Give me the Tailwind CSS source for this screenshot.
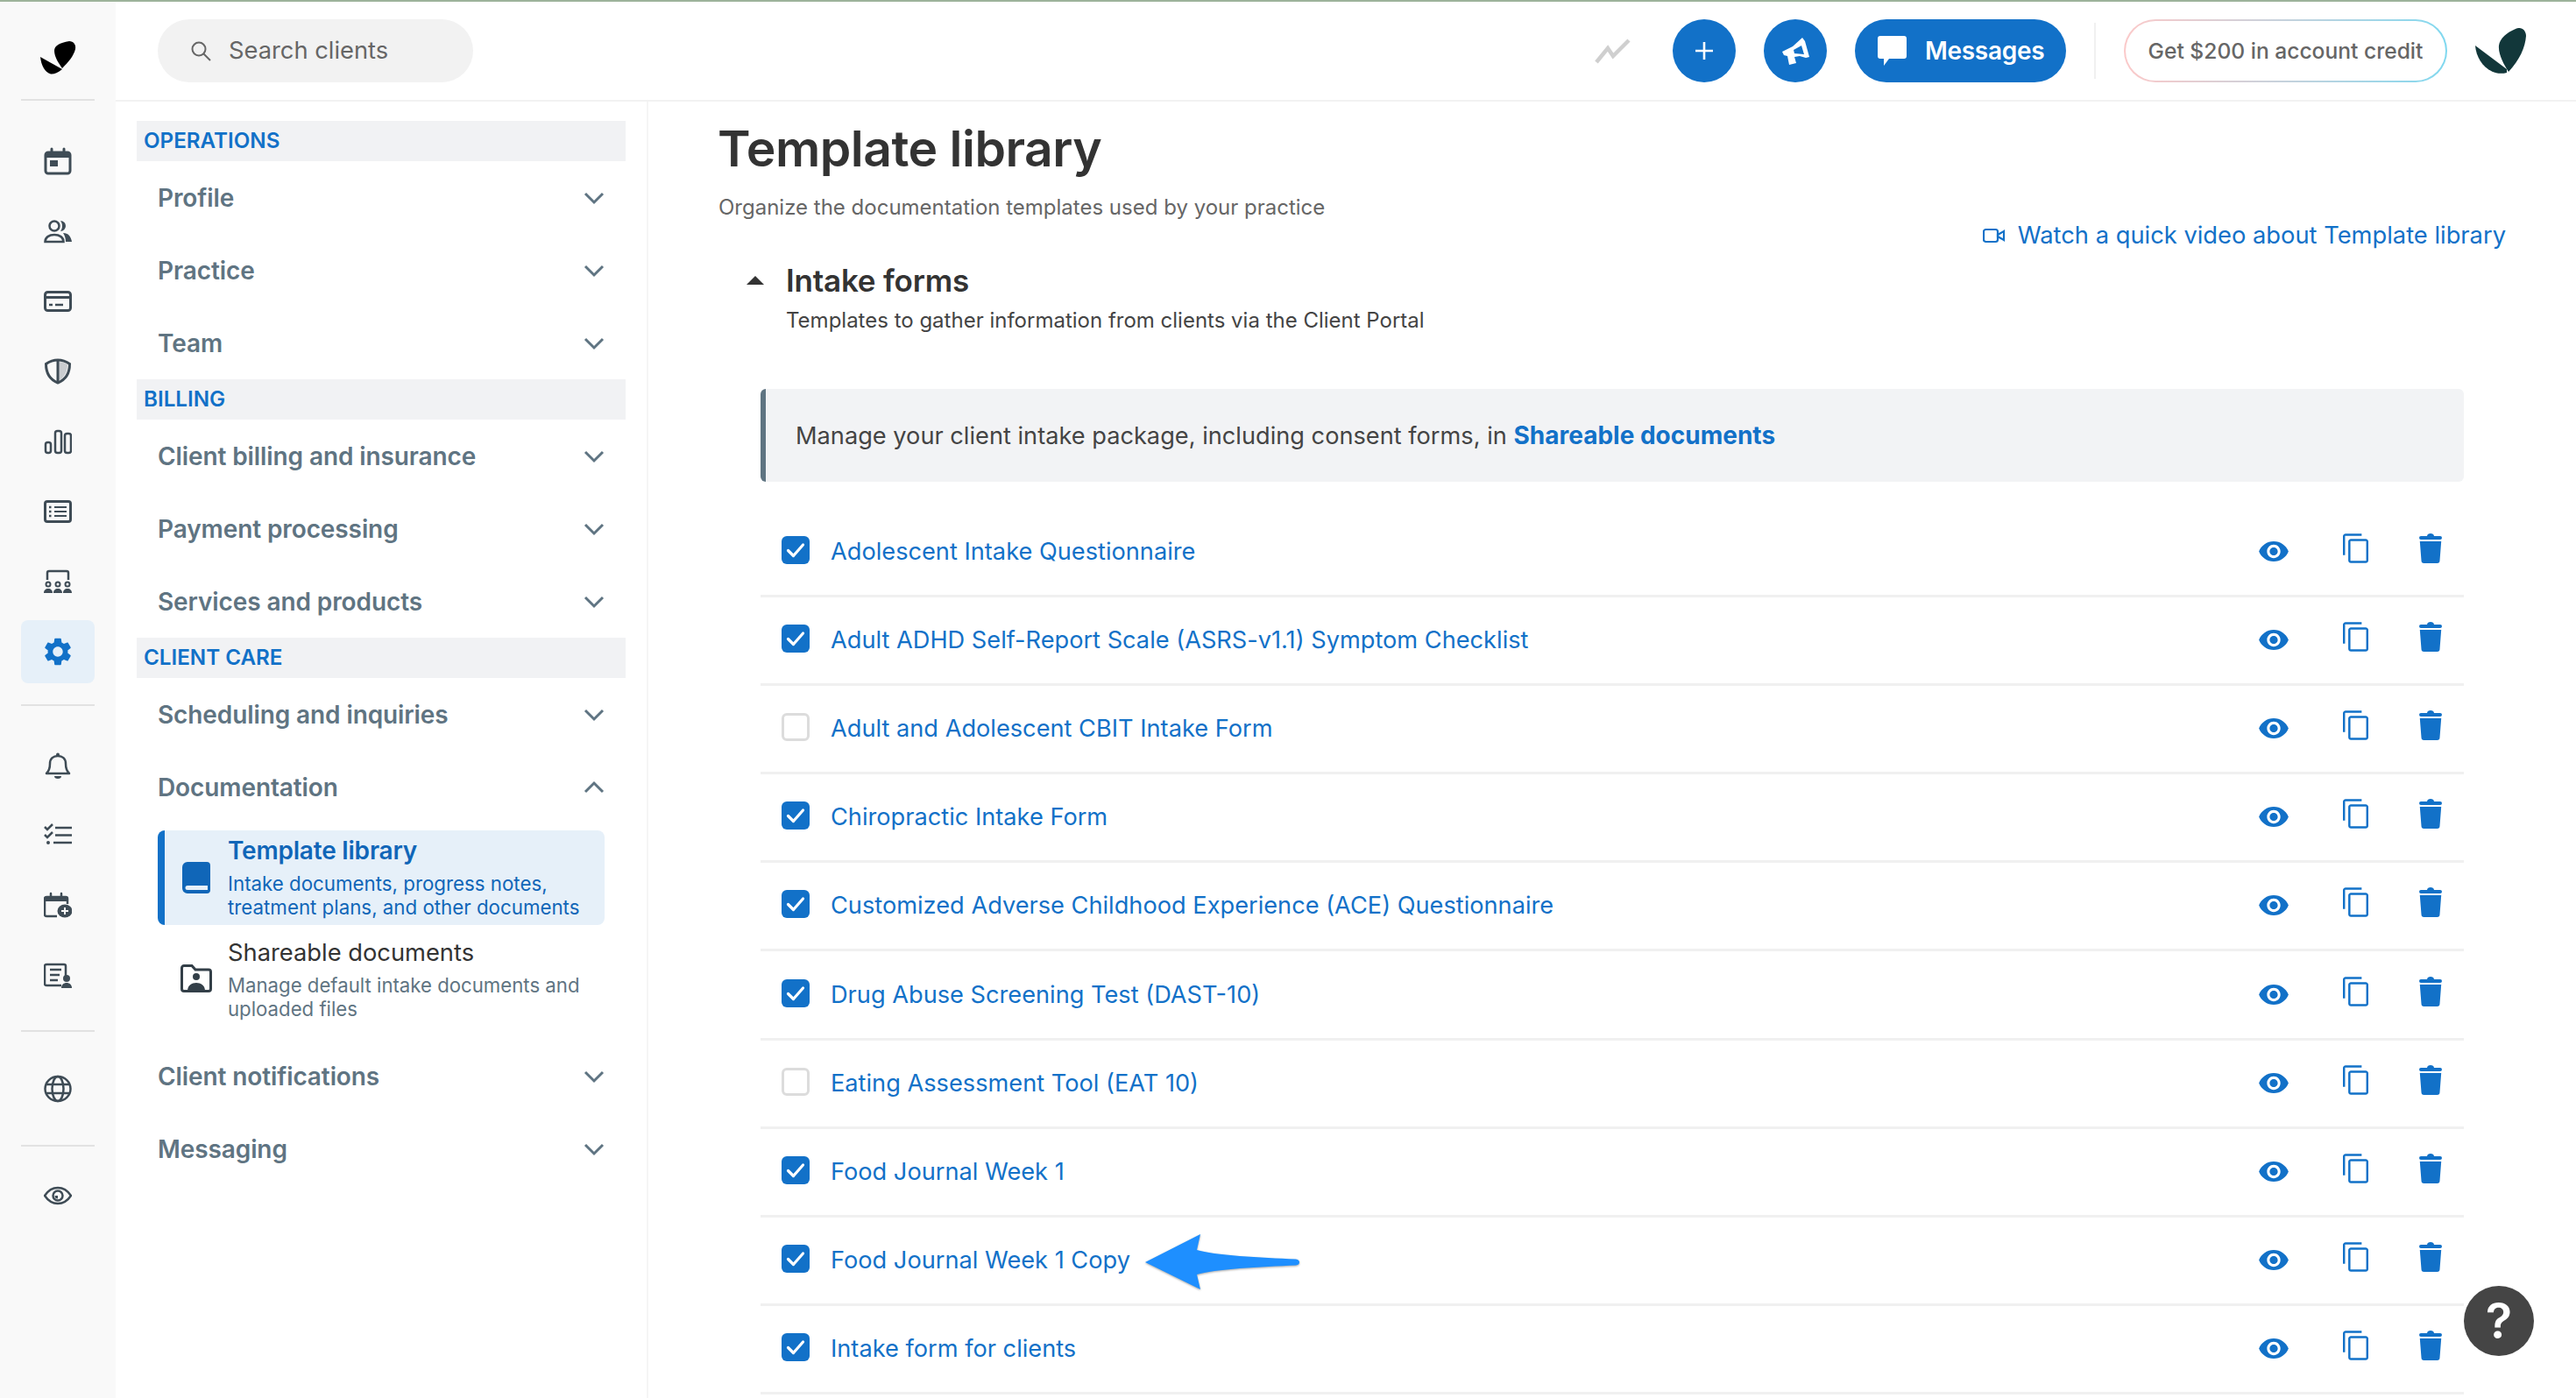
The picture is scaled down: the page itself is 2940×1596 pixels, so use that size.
<!DOCTYPE html>
<html>
  <head>
    <meta charset="utf-8">
    <script src="https://cdn.jsdelivr.net/npm/@tailwindcss/browser@4"></script>
  </head>

  <body class="bg-white">
    <div id="app" class="relative w-[2940px] h-[1596px] overflow-hidden font-[Inter,sans-serif]"></div>
    <script>
      const railIcons = {
        calendar: `<rect x="2" y="6" width="28" height="24" rx="3" fill="none" stroke="currentColor" stroke-width="3"/><path d="M2 6h28v6H2z" fill="currentColor"/><path d="M9 2v5M23 2v5" stroke="currentColor" stroke-width="3" stroke-linecap="round"/><rect x="7" y="15" width="9" height="7" fill="currentColor"/>`,
        people: `<circle cx="12" cy="10" r="5.5" fill="none" stroke="currentColor" stroke-width="2.5"/><path d="M1.5 28c0-5 4.500-8 10.500-8s10.500 3 10.500 8z" fill="none" stroke="currentColor" stroke-width="2.5"/><path d="M19 4a6 6 0 0 1 0 12c1.500-2 2-4 2-6s-.5-4-2-6zM22 18c6 0 9 4 10 10h-7c0-4-1-7-3-10z" fill="currentColor"/>`,
        card: `<rect x="1.500" y="5.500" width="29" height="21" rx="3" fill="none" stroke="currentColor" stroke-width="3"/><path d="M2 10h28v3H2z" fill="currentColor"/><path d="M6 20h4M13 20h9" stroke="currentColor" stroke-width="2.500"/>`,
        shield: `<path d="M16 3C11 3 6 5 2.500 7.500 2.500 17 6 25 16 29c10-4 13.500-12 13.500-21.500C26 5 21 3 16 3z" fill="none" stroke="currentColor" stroke-width="3"/><path d="M16 3v26" stroke="currentColor" stroke-width="3"/><path d="M16 5c4 0 8 1 11 3 0 8-3 15-11 19z" fill="currentColor" opacity=".25"/>`,
        bars: `<rect x="2" y="17" width="6" height="12" rx="2.500" fill="none" stroke="currentColor" stroke-width="2.500"/><rect x="13" y="4" width="7" height="25" rx="2.500" fill="none" stroke="currentColor" stroke-width="2.500"/><rect x="24" y="7" width="7" height="22" rx="2.500" fill="none" stroke="currentColor" stroke-width="2.500"/>`,
        list: `<rect x="1.500" y="4.500" width="29" height="23" rx="2.500" fill="none" stroke="currentColor" stroke-width="3"/><path d="M12 11h14M12 16h14M12 21h14" stroke="currentColor" stroke-width="2"/><path d="M6 11h2.500M6 16h2.500M6 21h2.500" stroke="currentColor" stroke-width="2.500"/>`,
        seats: `<path d="M4 14V6a2 2 0 0 1 2-2h20a2 2 0 0 1 2 2v8" fill="none" stroke="currentColor" stroke-width="2.500"/><circle cx="5" cy="19" r="2.500" fill="none" stroke="currentColor" stroke-width="2"/><circle cx="16" cy="19" r="2.500" fill="none" stroke="currentColor" stroke-width="2"/><circle cx="27" cy="19" r="2.500" fill="none" stroke="currentColor" stroke-width="2"/><path d="M0 29c0-3 2-5 5-5s5 2 5 5zM11 29c0-3 2-5 5-5s5 2 5 5zM22 29c0-3 2-5 5-5s5 2 5 5z" fill="currentColor"/>`,
        gear: `<path transform="scale(1.333)" d="M19.14 12.94c.04-.3.06-.61.06-.94 0-.32-.02-.64-.07-.94l2.03-1.58c.18-.14.23-.41.12-.61l-1.92-3.32c-.12-.22-.37-.29-.59-.22l-2.39.96c-.5-.38-1.03-.7-1.62-.94l-.36-2.54c-.04-.24-.24-.41-.48-.41h-3.84c-.24 0-.43.17-.47.41l-.36 2.54c-.59.24-1.13.57-1.62.94l-2.39-.96c-.22-.08-.47 0-.59.22L2.74 8.87c-.12.21-.08.47.12.61l2.03 1.58c-.05.3-.09.63-.09.94s.02.64.07.94l-2.03 1.58c-.18.14-.23.41-.12.61l1.92 3.32c.12.22.37.29.59.22l2.39-.96c.5.38 1.03.7 1.62.94l.36 2.54c.05.24.24.41.48.41h3.84c.24 0 .44-.17.47-.41l.36-2.54c.59-.24 1.13-.56 1.62-.94l2.39.96c.22.08.47 0 .59-.22l1.92-3.32c.12-.22.07-.47-.12-.61l-2.01-1.58zM12 15.6c-1.98 0-3.6-1.62-3.6-3.6s1.62-3.6 3.6-3.6 3.6 1.62 3.6 3.6-1.62 3.6-3.6 3.6z" fill="currentColor"/>`,
        bell: `<path d="M3 25c3-3 4-6 4-11 0-6 4-9 9-9s9 3 9 9c0 5 1 8 4 11z" fill="none" stroke="currentColor" stroke-width="2.500" stroke-linejoin="round"/><circle cx="16" cy="3.500" r="2" fill="currentColor"/><path d="M12 28h8a4 3 0 0 1-8 0z" fill="currentColor"/>`,
        check: `<path d="M1 6l3 3 6-6M1 15l3 3 6-6" fill="none" stroke="currentColor" stroke-width="2.500"/><circle cx="5" cy="24" r="2" fill="currentColor"/><path d="M13 7h19M13 15.500h19M11 24h21" stroke="currentColor" stroke-width="2.500"/>`,
        calplus: `<path d="M15 28H3a2 2 0 0 1-2-2V8a2 2 0 0 1 2-2h22a2 2 0 0 1 2 2v6" fill="none" stroke="currentColor" stroke-width="2.500"/><path d="M1 6h26v5H1z" fill="currentColor"/><path d="M8 2v5M20 2v5" stroke="currentColor" stroke-width="2.500" stroke-linecap="round"/><ellipse cx="24" cy="22" rx="8.500" ry="7.500" fill="currentColor"/><path d="M24 18v8M20 22h8" stroke="#f9f9f9" stroke-width="2"/>`,
        docperson: `<path d="M20 27H3a2 2 0 0 1-2-2V5a2 2 0 0 1 2-2h20a2 2 0 0 1 2 2v11" fill="none" stroke="currentColor" stroke-width="2.500"/><path d="M7 9h13M7 15h11M7 21h9" stroke="currentColor" stroke-width="2.500"/><circle cx="26" cy="19" r="4" fill="currentColor"/><path d="M20 30c0-4 3-6 6-6s6 2 6 6z" fill="currentColor"/>`,
        globe: `<ellipse cx="16" cy="16" rx="14.500" ry="14" fill="none" stroke="currentColor" stroke-width="2.500"/><ellipse cx="16" cy="16" rx="6.500" ry="14" fill="none" stroke="currentColor" stroke-width="2.500"/><path d="M3 11h26M3 21h26" stroke="currentColor" stroke-width="2.500"/>`,
        eye: `<path d="M1 16C5 10 10 7 16 7s11 3 15 9c-4 6-9 9-15 9S5 22 1 16z" fill="none" stroke="currentColor" stroke-width="2.500"/><circle cx="16" cy="16" r="5.500" fill="none" stroke="currentColor" stroke-width="2.500"/><path d="M16 12.500a3.500 3.500 0 0 1 3.500 3.500h-3.500z" transform="rotate(180 16 16)" fill="currentColor"/>`,
      };

      const railGroups = [
        ['calendar', 'people', 'card', 'shield', 'bars', 'list', 'seats', 'gear'],
        ['bell', 'check', 'calplus', 'docperson'],
        ['globe'],
        ['eye'],
      ];

      const navSections = [
        { title: 'OPERATIONS', items: ['Profile', 'Practice', 'Team'] },
        { title: 'BILLING', items: ['Client billing and insurance', 'Payment processing', 'Services and products'] },
        { title: 'CLIENT CARE', items: ['Scheduling and inquiries'] },
      ];

      const templates = [
        ['Adolescent Intake Questionnaire', true],
        ['Adult ADHD Self-Report Scale (ASRS-v1.1) Symptom Checklist', true],
        ['Adult and Adolescent CBIT Intake Form', false],
        ['Chiropractic Intake Form', true],
        ['Customized Adverse Childhood Experience (ACE) Questionnaire', true],
        ['Drug Abuse Screening Test (DAST-10)', true],
        ['Eating Assessment Tool (EAT 10)', false],
        ['Food Journal Week 1', true],
        ['Food Journal Week 1 Copy', true],
        ['Intake form for clients', true],
      ];

      function chevron(up) {
        return `<svg class="w-[24px] h-[16px] text-[#5f7482] ${up ? 'rotate-180' : ''}" viewBox="0 0 24 16"><path d="M2 3l10 10L22 3" fill="none" stroke="currentColor" stroke-width="3"/></svg>`;
      }

      function navItem(label, up) {
        return `
          <div class="h-[83px] pl-[24px] pr-[24px] flex items-center justify-between">
            <span class="text-[28px] font-semibold text-[#5f7482] tracking-[-0.1px]">${label}</span>
            ${chevron(up)}
          </div>`;
      }

      function navSection(section) {
        return `
          <div class="h-[46px] bg-[#f1f2f4] pl-[8px] pt-[1px] flex items-center text-[24.2px] leading-none font-semibold text-[#1271c8]">${section.title}</div>
          ${section.items.map((item) => navItem(item)).join('')}`;
      }

      function row(template) {
        const box = template[1]
          ? `<span class="w-[32px] h-[32px] mb-[4px] rounded-[6px] bg-[#1271c8] flex items-center justify-center"><svg class="w-[22px] h-[18px]" viewBox="0 0 22 18"><path d="M2.500 9.500l6 6L19.500 3" fill="none" stroke="white" stroke-width="3.200" stroke-linecap="round" stroke-linejoin="round"/></svg></span>`
          : `<span class="w-[32px] h-[32px] mb-[4px] rounded-[6px] border-[3px] border-[#dcdcdc] bg-white"></span>`;
        return `
          <div class="h-[101.1px] border-b-[3px] border-[#f0f0f0] pl-[24px] pr-[25px] flex items-center text-[#1271c8]">
            ${box}
            <a class="ml-[24px] text-[27.2px] leading-[40px]">${template[0]}</a>
            <svg class="ml-auto w-[34px] h-[23px] mb-[1px]" viewBox="1 4.500 22 15"><path fill="currentColor" d="M12 4.500C7 4.500 2.730 7.610 1 12c1.730 4.390 6 7.500 11 7.500s9.270-3.110 11-7.500c-1.730-4.390-6-7.500-11-7.500zM12 17c-2.760 0-5-2.240-5-5s2.240-5 5-5 5 2.240 5 5-2.240 5-5 5zm0-8c-1.660 0-3 1.340-3 3s1.340 3 3 3 3-1.340 3-3-1.340-3-3-3z"/></svg>
            <svg class="ml-[62px] w-[29px] h-[34px] mb-[8px]" viewBox="2 1 19 22"><path fill="currentColor" d="M16 1H4c-1.100 0-2 .9-2 2v14h1.600V2.600H16V1zm3 4H8c-1.100 0-2 .9-2 2v14c0 1.100.9 2 2 2h11c1.100 0 2-.9 2-2V7c0-1.100-.9-2-2-2zm.4 16.400H7.600V6.600h11.800v14.800z"/></svg>
            <svg class="ml-[58px] w-[26px] h-[34px] mb-[8px]" viewBox="0 0 26 34"><path fill="currentColor" d="M9 3c0-2 2-3 4-3s4 1 4 3h7a2 2 0 0 1 0 4H2a2 2 0 0 1 0-4zM.8 9h24.400L23.500 31a3 3 0 0 1-3 3h-15a3 3 0 0 1-3-3z"/></svg>
          </div>`;
      }

      function view() {
        return `
          <div class="flex h-full">
            <!-- icon rail -->
            <aside class="w-[132px] shrink-0 bg-[#f9f9f9] flex flex-col items-center">
              <div class="h-[113px] flex items-center justify-center pt-[18px]">
                <svg class="w-[41px] h-[38px] text-black" viewBox="0 0 41 38"><path fill="currentColor" d="M33 0C38 0 41 4 40 9 38 17 32 24 25 31 21 25 16 18 16 11 16 5 22 2 33 0Z"/><path fill="currentColor" d="M0 18L25 32C20 36 15 38 12 37.500 5 36 1 27 0 18Z"/></svg>
              </div>
              ${railGroups.map((group, i) => `
                <div class="w-[84px] h-[2px] bg-[#e2e2e2] shrink-0"></div>
                <div class="${['pt-[29px] pb-[20px]', 'pt-[28px] pb-[22px]', 'pt-[25px] pb-[24px]', 'pt-[16px]'][i]} flex flex-col items-center">
                  ${group.map((name) => `
                    <div class="w-[84px] h-[80px] flex items-center justify-center">
                      <div class="w-[84px] h-[72px] flex items-center justify-center rounded-[8px] ${name === 'gear' ? 'bg-[#e6f0f9] text-[#1271c8]' : 'text-[#3f4c56]'}">
                        <svg class="${name === 'gear' ? 'w-[38px] h-[38px]' : 'w-[32px] h-[32px]'}" viewBox="0 0 32 32">${railIcons[name]}</svg>
                      </div>
                    </div>`).join('')}
                </div>`).join('')}
            </aside>

            <div class="flex-1 flex flex-col min-w-0">
              <!-- top bar -->
              <header class="h-[116px] shrink-0 border-b-[2px] border-[#f2f2f2] flex items-center pt-[2px] pl-[48px] pr-[57px]">
                <div class="w-[360px] h-[72px] rounded-full bg-[#f2f2f2] pl-[37px] flex items-center gap-[20px] text-[#666]">
                  <svg class="w-[24px] h-[24px]" viewBox="0 0 24 24"><circle cx="10" cy="10" r="7.500" fill="none" stroke="currentColor" stroke-width="2"/><path d="M15.500 15.500L23 23" stroke="currentColor" stroke-width="2"/></svg>
                  <span class="text-[27.3px]">Search clients</span>
                </div>
                <svg class="ml-auto w-[42px] h-[30px]" viewBox="0 0 42 30"><path d="M2 28L15 12l6 9L39 3" fill="none" stroke="#cfcfcf" stroke-width="4.500"/></svg>
                <div class="ml-[47px] w-[72px] h-[72px] rounded-full bg-[#1271c8] flex items-center justify-center">
                  <svg class="w-[24px] h-[24px]" viewBox="0 0 24 24"><path d="M12 2v20M2 12h20" stroke="white" stroke-width="2.600"/></svg>
                </div>
                <div class="ml-[32px] w-[72px] h-[72px] rounded-full bg-[#1271c8] flex items-center justify-center">
                  <svg class="w-[31px] h-[31px]" viewBox="0 0 31 31"><path fill="white" fill-rule="evenodd" d="M0 16L12 10 23 0 26 4 31 22 27 23 20 21 14 22 16 29 8 31 6 21 2 20ZM13 14L22 9 25 19 14 18Z"/></svg>
                </div>
                <div class="ml-[32px] w-[241px] h-[72px] rounded-full bg-[#1271c8] pl-[26px] flex items-center gap-[21px] text-white">
                  <svg class="w-[33px] h-[34px]" viewBox="0 0 33 34"><path fill="white" d="M3 0h27a3 3 0 0 1 3 3v20a3 3 0 0 1-3 3H13l-6 8v-8H3a3 3 0 0 1-3-3V3a3 3 0 0 1 3-3z"/></svg>
                  <span class="text-[28px] font-semibold tracking-[-0.3px]">Messages</span>
                </div>
                <div class="ml-[32px] w-[2px] h-[64px] bg-[#f0f0f0]"></div>
                <div class="ml-[32px] w-[369px] h-[72px] rounded-full bg-linear-to-r from-[#fbc9c9] to-[#7fd8ef] p-[2px]">
                  <div class="w-full h-full rounded-full bg-white flex items-center justify-center text-[24.6px] font-medium text-[#666]">Get $200 in account credit</div>
                </div>
                <svg class="ml-[32px] w-[58px] h-[52px]" viewBox="0 0 58 52"><path fill="#12373a" d="M46 1C52-2 58 2 58 9 57 22 51 36 38 50 33 42 26 30 27 20 28 12 36 5 46 1Z"/><path fill="#12373a" d="M0 20L36 47 36 51C30 52.500 24 52 19 49.500 8 44 1 33 0 20Z"/></svg>
              </header>

              <div class="flex-1 flex min-h-0">
                <!-- settings nav -->
                <nav class="w-[608px] shrink-0 border-r-[2px] border-[#f5f5f5] pt-[22px] pl-[24px] pr-[24px]">
                  ${navSections.map(navSection).join('')}
                  ${navItem('Documentation', true)}
                  <div class="mt-[8px] ml-[24px] mr-[24px] h-[108px] rounded-[8px] bg-[#e6f0f9] border-l-[8px] border-[#1271c8] flex items-center text-[#1066b8]">
                    <svg class="ml-[20px] w-[32px] h-[36px] shrink-0" viewBox="0 0 32 36"><path fill="currentColor" d="M6 0h22a4 4 0 0 1 4 4v28a4 4 0 0 1-4 4H6a6 6 0 0 1-6-6V6a6 6 0 0 1 6-6zm0 27a2.500 2.500 0 0 0 0 5h23v-5z" fill-rule="evenodd"/></svg>
                    <div class="ml-[20px] mb-[3px]">
                      <div class="text-[28px] leading-[36px] font-semibold tracking-[-0.2px]">Template library</div>
                      <div class="text-[22.3px] leading-[27px] whitespace-nowrap pt-[6px]">Intake documents, progress notes,<br>treatment plans, and other documents</div>
                    </div>
                  </div>
                  <div class="mt-[7px] ml-[24px] mr-[24px] h-[108px] flex items-center">
                    <svg class="ml-[26px] w-[36px] h-[32px] shrink-0 text-[#333f48]" viewBox="0 0 36 32"><path d="M1.500 4a2.500 2.500 0 0 1 2.500-2.500h9L17 6h15a2.500 2.500 0 0 1 2.500 2.500V28a2.500 2.500 0 0 1-2.500 2.500H4A2.500 2.500 0 0 1 1.500 28z" fill="none" stroke="currentColor" stroke-width="3"/><circle cx="18" cy="14" r="4" fill="currentColor"/><path d="M8 30c0-6 5-9 10-9s10 3 10 9z" fill="currentColor"/></svg>
                    <div class="ml-[18px]">
                      <div class="text-[27.3px] leading-[36px] text-[#333]">Shareable documents</div>
                      <div class="text-[22.2px] leading-[27px] text-[#5f7482] whitespace-nowrap pt-[5px]">Manage default intake documents and<br>uploaded files</div>
                    </div>
                  </div>
                  <div class="mt-[16px]">
                    ${navItem('Client notifications')}
                    ${navItem('Messaging')}
                  </div>
                </nav>

                <!-- template library -->
                <main class="flex-1 min-w-0 pt-[18px] pl-[80px]">
                  <h1 class="-ml-[1px] text-[57px] leading-[72px] font-semibold text-[#333] tracking-[-0.5px]">Template library</h1>
                  <p class="mt-[15px] text-[24px] leading-[32px] text-[#666]">Organize the documentation templates used by your practice</p>
                  <div class="h-[32px] pr-[80px] flex items-center justify-end gap-[14px] text-[#1271c8]">
                    <svg class="w-[26px] h-[18px]" viewBox="0 0 26 18"><rect x="1" y="2" width="16" height="14" rx="2.500" fill="none" stroke="currentColor" stroke-width="2.200"/><path d="M17 8l7-4v10l-7-4z" fill="none" stroke="currentColor" stroke-width="2.200"/></svg>
                    <a class="text-[27.3px]">Watch a quick video about Template library</a>
                  </div>
                  <div class="mt-[13px] h-[44px] flex items-center">
                    <svg class="ml-[32px] w-[20px] h-[10px]" viewBox="0 0 20 10"><path d="M10 0l10 10H0z" fill="#333"/></svg>
                    <h2 class="ml-[25px] text-[35px] font-semibold text-[#333] tracking-[-0.2px]">Intake forms</h2>
                  </div>
                  <p class="mt-[8px] ml-[77px] text-[24px] leading-[32px] text-[#444]">Templates to gather information from clients via the Client Portal</p>
                  <div class="ml-[48px] w-[1944px]">
                    <div class="mt-[62px] h-[106px] rounded-[6px] bg-[#f2f3f5] border-l-[6px] border-[#5f7482] pl-[34px] flex items-center text-[27.2px] text-[#444]">
                      <span>Manage your client intake package, including consent forms, in <a class="font-bold text-[28px] text-[#1271c8]">Shareable documents</a></span>
                    </div>
                    <div class="mt-[31px]">${templates.map(row).join('')}</div>
                  </div>
                </main>
              </div>
            </div>
          </div>

          <!-- annotation arrow over the list -->
          <svg class="absolute left-[1300px] top-[1404px] w-[190px] h-[74px] drop-shadow-[0_1px_1px_rgba(0,0,0,0.35)]" viewBox="1300 1404 190 74"><path fill="#1e8fff" d="M1307 1441L1370 1409 1366 1427C1385 1433 1440 1436 1479 1437.500Q1483 1438 1483 1441 1483 1444 1479 1444.500C1440 1446 1385 1449 1366 1455L1370 1472Z"/></svg>

          <!-- help button -->
          <div class="absolute left-[2812px] top-[1468px] w-[80px] h-[80px] rounded-full bg-[#454545] flex items-center justify-center text-white text-[56px] font-semibold leading-none">?</div>
        `;
      }

      document.getElementById('app').innerHTML = `<div class="absolute top-0 left-0 w-full h-[2px] bg-[#9db39b] z-10"></div>` + view();
    </script>
  </body>
</html>
